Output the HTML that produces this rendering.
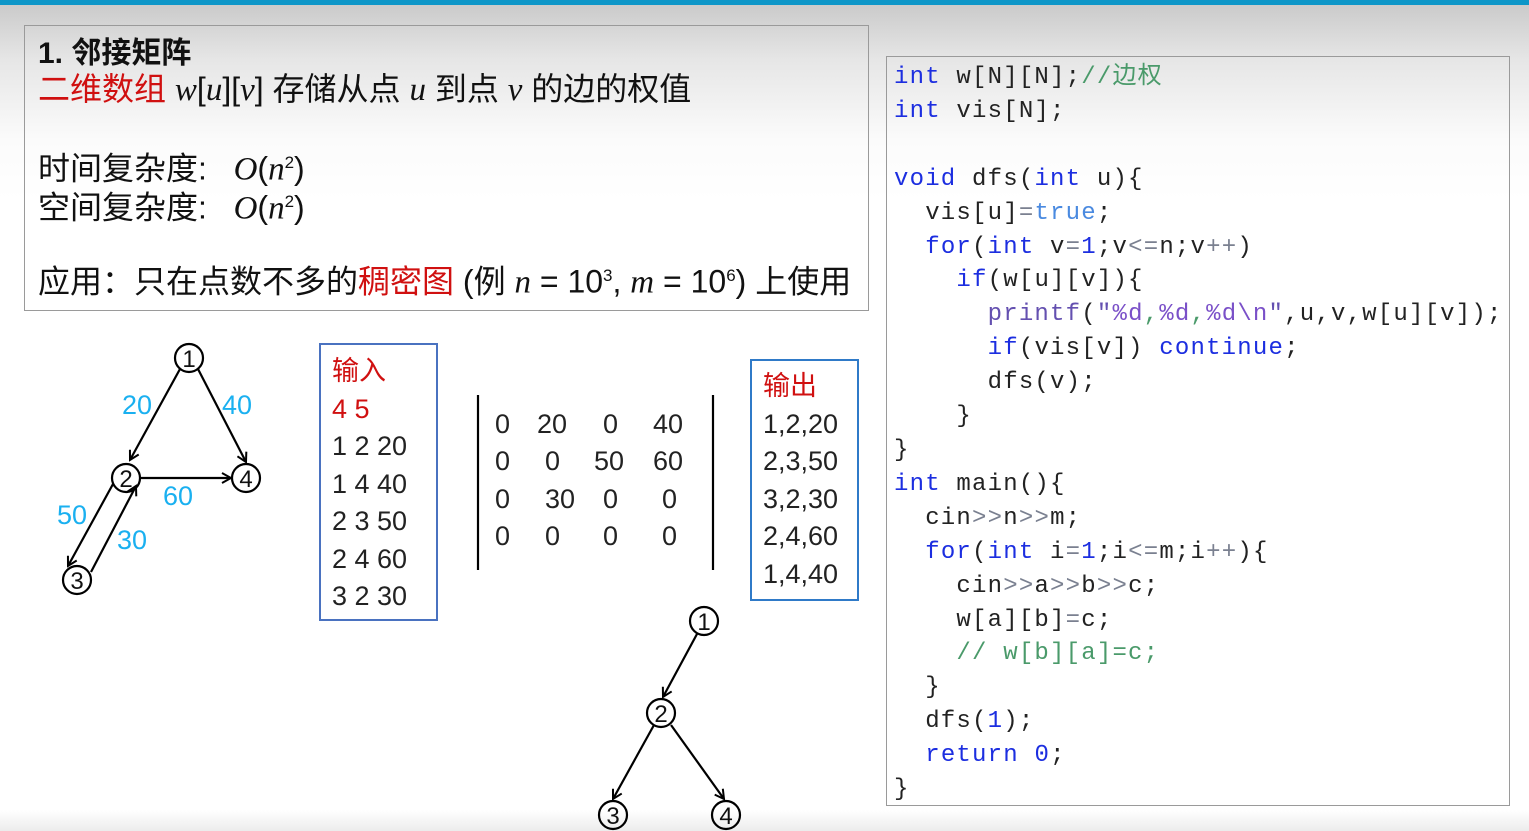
<!DOCTYPE html>
<html><head><meta charset="utf-8"><style>
body{margin:0;width:1529px;height:831px;overflow:hidden;position:relative;font-family:"Liberation Sans","Noto Sans CJK SC",sans-serif;background:linear-gradient(#c8c8c8 0px,#e6e6e6 60px,#fbfbfb 140px,#fff 200px,#fff 810px,#ececec 831px);}
.a{position:absolute;white-space:nowrap;}
.box1{position:absolute;left:24px;top:25px;width:845px;height:286px;border:1px solid #9a9a9a;box-sizing:border-box;}
.t{font-size:32px;color:#111;line-height:36px}
.r{color:#d01010}
.m{font-family:"Liberation Serif",serif;font-style:italic;font-size:33px}
.code{position:absolute;left:886px;top:56px;width:624px;height:750px;border:1px solid #9a9a9a;box-sizing:border-box;}
pre{position:absolute;left:894px;top:61px;margin:0;font-family:"Liberation Mono",monospace;font-size:24px;letter-spacing:1.2px;line-height:33.9px;color:#222;}
.k{color:#1c2ee0}.o{color:#7a8090}.c{color:#4a9a6a}.p{color:#6450b0}.s{color:#7a50c8}.tr{color:#4a8ae0}
.n{font-size:27px;color:#222;}
.cy{color:#1ab0f0;font-size:27px;}
</style></head><body>
<div class="a" style="left:0;top:0;width:1529px;height:5px;background:#0d96c8"></div>
<div class="box1"></div>
<div class="a t" style="left:38px;top:36px;font-weight:bold;font-size:30px">1. 邻接矩阵</div>
<div class="a t" style="left:38px;top:71px;"><span class="r">二维数组</span> <span class="m">w</span>[<span class="m">u</span>][<span class="m">v</span>] 存储从点 <span class="m">u</span> 到点 <span class="m">v</span> 的边的权值</div>
<div class="a t" style="left:38px;top:145px;">时间复杂度:&nbsp;&nbsp; <span class="m">O</span>(<span class="m">n</span><sup style="font-size:17px">2</sup>)</div>
<div class="a t" style="left:38px;top:184px;">空间复杂度:&nbsp;&nbsp; <span class="m">O</span>(<span class="m">n</span><sup style="font-size:17px">2</sup>)</div>
<div class="a t" style="left:38px;top:258px;">应用：只在点数不多的<span class="r">稠密图</span> (例 <span class="m">n</span> = 10<sup style="font-size:17px">3</sup>, <span class="m">m</span> = 10<sup style="font-size:17px">6</sup>) 上使用</div>

<svg class="a" style="left:0;top:320px" width="900" height="511">
<defs><marker id="ar" markerWidth="12" markerHeight="12" refX="10" refY="6" orient="auto" markerUnits="userSpaceOnUse"><path d="M1,1 L10,6 L1,11" fill="none" stroke="#000" stroke-width="2"/></marker></defs>
<g stroke="#000" stroke-width="2.2" fill="none">
<circle cx="189" cy="38" r="14"/><circle cx="126" cy="158" r="14"/><circle cx="246" cy="158" r="14"/><circle cx="77" cy="260" r="14"/>
<line x1="180" y1="49" x2="130" y2="140" marker-end="url(#ar)"/>
<line x1="198" y1="49" x2="246" y2="142" marker-end="url(#ar)"/>
<line x1="141" y1="158" x2="231" y2="158" marker-end="url(#ar)"/>
<line x1="113" y1="164" x2="68" y2="246" marker-end="url(#ar)"/>
<line x1="91" y1="252" x2="136" y2="166" marker-end="url(#ar)"/>
<circle cx="704" cy="301" r="14"/><circle cx="661" cy="393" r="14"/><circle cx="613" cy="495" r="14"/><circle cx="726" cy="495" r="14"/>
<line x1="697" y1="314" x2="663" y2="377" marker-end="url(#ar)"/>
<line x1="654" y1="405" x2="613" y2="479" marker-end="url(#ar)"/>
<line x1="671" y1="405" x2="724" y2="479" marker-end="url(#ar)"/>
<line x1="478" y1="75" x2="478" y2="250"/>
<line x1="713" y1="75" x2="713" y2="250"/>
</g>
<g font-family="Liberation Sans" font-size="24" fill="#111" text-anchor="middle">
<text x="189" y="47">1</text><text x="126" y="167">2</text><text x="246" y="167">4</text><text x="77" y="269">3</text>
<text x="704" y="310">1</text><text x="661" y="402">2</text><text x="613" y="504">3</text><text x="726" y="504">4</text>
</g>
</svg>
<div class="a cy" style="left:122px;top:390px">20</div>
<div class="a cy" style="left:222px;top:390px">40</div>
<div class="a cy" style="left:163px;top:481px">60</div>
<div class="a cy" style="left:57px;top:500px">50</div>
<div class="a cy" style="left:117px;top:525px">30</div>

<div class="a" style="left:319px;top:343px;width:119px;height:278px;border:2px solid #4a72c0;box-sizing:border-box"></div>
<div class="a n" style="left:332px;top:353px;line-height:37.5px">
<span class="r">输入</span><br><span class="r">4 5</span><br>1 2 20<br>1 4 40<br>2 3 50<br>2 4 60<br>3 2 30</div>

<div class="a n" style="left:495px;top:406px;line-height:37.5px;">
<span class="a" style="left:0">0</span><span class="a" style="left:42px">20</span><span class="a" style="left:108px">0</span><span class="a" style="left:158px">40</span><br>
<span class="a" style="left:0;top:37px">0</span><span class="a" style="left:50px;top:37px">0</span><span class="a" style="left:99px;top:37px">50</span><span class="a" style="left:158px;top:37px">60</span>
<span class="a" style="left:0;top:75px">0</span><span class="a" style="left:50px;top:75px">30</span><span class="a" style="left:108px;top:75px">0</span><span class="a" style="left:167px;top:75px">0</span>
<span class="a" style="left:0;top:112px">0</span><span class="a" style="left:50px;top:112px">0</span><span class="a" style="left:108px;top:112px">0</span><span class="a" style="left:167px;top:112px">0</span>
</div>

<div class="a" style="left:750px;top:359px;width:109px;height:242px;border:2px solid #2f7ac8;box-sizing:border-box"></div>
<div class="a n" style="left:763px;top:368px;line-height:37.5px"><span class="r">输出</span><br>1,2,20<br>2,3,50<br>3,2,30<br>2,4,60<br>1,4,40</div>

<div class="code"></div>
<pre><span class="k">int</span> w[N][N];<span class="c">//边权</span>
<span class="k">int</span> vis[N];

<span class="k">void</span> dfs(<span class="k">int</span> u){
  vis[u]<span class="o">=</span><span class="tr">true</span>;
  <span class="k">for</span>(<span class="k">int</span> v<span class="o">=</span><span class="k">1</span>;v<span class="o">&lt;=</span>n;v<span class="o">++</span>)
    <span class="k">if</span>(w[u][v]){
      <span class="p">printf</span>(<span class="p">"</span><span class="s">%d</span><span class="c">,</span><span class="s">%d</span><span class="c">,</span><span class="s">%d\n</span><span class="p">"</span>,u,v,w[u][v]);
      <span class="k">if</span>(vis[v]) <span class="k">continue</span>;
      dfs(v);
    }
}
<span class="k">int</span> main(){
  cin<span class="o">&gt;&gt;</span>n<span class="o">&gt;&gt;</span>m;
  <span class="k">for</span>(<span class="k">int</span> i<span class="o">=</span><span class="k">1</span>;i<span class="o">&lt;=</span>m;i<span class="o">++</span>){
    cin<span class="o">&gt;&gt;</span>a<span class="o">&gt;&gt;</span>b<span class="o">&gt;&gt;</span>c;
    w[a][b]<span class="o">=</span>c;
    <span class="c">// w[b][a]=c;</span>
  }
  dfs(<span class="k">1</span>);
  <span class="k">return</span> <span class="k">0</span>;
}</pre>
</body></html>
